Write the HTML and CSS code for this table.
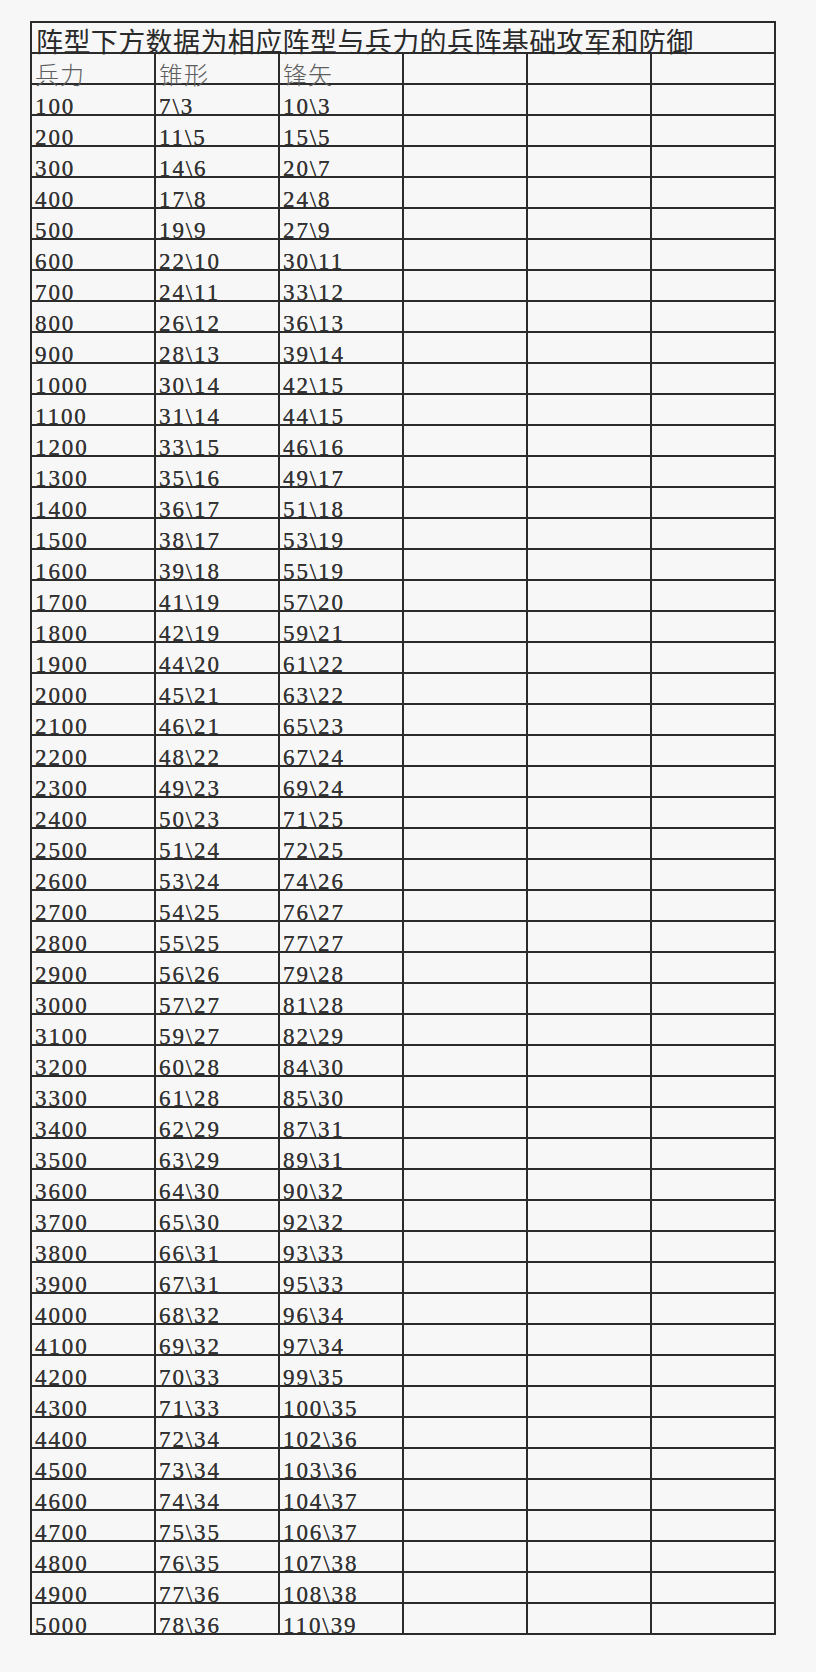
FILE: index.html
```html
<!DOCTYPE html>
<html lang="zh-CN">
<head>
<meta charset="utf-8">
<title>阵型数据</title>
<link rel="stylesheet" href="styles.css">
</head>
<body>
<div class="page">
<table class="sheet">
<colgroup><col><col><col><col><col><col></colgroup>
<tr class="title-row"><td colspan="6" class="title">阵型下方数据为相应阵型与兵力的兵阵基础攻军和防御</td></tr>
<tr class="head-row"><td>兵力</td><td>锥形</td><td>锋矢</td><td></td><td></td><td></td></tr>
<tr><td>100</td><td>7\3</td><td>10\3</td><td></td><td></td><td></td></tr>
<tr><td>200</td><td>11\5</td><td>15\5</td><td></td><td></td><td></td></tr>
<tr><td>300</td><td>14\6</td><td>20\7</td><td></td><td></td><td></td></tr>
<tr><td>400</td><td>17\8</td><td>24\8</td><td></td><td></td><td></td></tr>
<tr><td>500</td><td>19\9</td><td>27\9</td><td></td><td></td><td></td></tr>
<tr><td>600</td><td>22\10</td><td>30\11</td><td></td><td></td><td></td></tr>
<tr><td>700</td><td>24\11</td><td>33\12</td><td></td><td></td><td></td></tr>
<tr><td>800</td><td>26\12</td><td>36\13</td><td></td><td></td><td></td></tr>
<tr><td>900</td><td>28\13</td><td>39\14</td><td></td><td></td><td></td></tr>
<tr><td>1000</td><td>30\14</td><td>42\15</td><td></td><td></td><td></td></tr>
<tr><td>1100</td><td>31\14</td><td>44\15</td><td></td><td></td><td></td></tr>
<tr><td>1200</td><td>33\15</td><td>46\16</td><td></td><td></td><td></td></tr>
<tr><td>1300</td><td>35\16</td><td>49\17</td><td></td><td></td><td></td></tr>
<tr><td>1400</td><td>36\17</td><td>51\18</td><td></td><td></td><td></td></tr>
<tr><td>1500</td><td>38\17</td><td>53\19</td><td></td><td></td><td></td></tr>
<tr><td>1600</td><td>39\18</td><td>55\19</td><td></td><td></td><td></td></tr>
<tr><td>1700</td><td>41\19</td><td>57\20</td><td></td><td></td><td></td></tr>
<tr><td>1800</td><td>42\19</td><td>59\21</td><td></td><td></td><td></td></tr>
<tr><td>1900</td><td>44\20</td><td>61\22</td><td></td><td></td><td></td></tr>
<tr><td>2000</td><td>45\21</td><td>63\22</td><td></td><td></td><td></td></tr>
<tr><td>2100</td><td>46\21</td><td>65\23</td><td></td><td></td><td></td></tr>
<tr><td>2200</td><td>48\22</td><td>67\24</td><td></td><td></td><td></td></tr>
<tr><td>2300</td><td>49\23</td><td>69\24</td><td></td><td></td><td></td></tr>
<tr><td>2400</td><td>50\23</td><td>71\25</td><td></td><td></td><td></td></tr>
<tr><td>2500</td><td>51\24</td><td>72\25</td><td></td><td></td><td></td></tr>
<tr><td>2600</td><td>53\24</td><td>74\26</td><td></td><td></td><td></td></tr>
<tr><td>2700</td><td>54\25</td><td>76\27</td><td></td><td></td><td></td></tr>
<tr><td>2800</td><td>55\25</td><td>77\27</td><td></td><td></td><td></td></tr>
<tr><td>2900</td><td>56\26</td><td>79\28</td><td></td><td></td><td></td></tr>
<tr><td>3000</td><td>57\27</td><td>81\28</td><td></td><td></td><td></td></tr>
<tr><td>3100</td><td>59\27</td><td>82\29</td><td></td><td></td><td></td></tr>
<tr><td>3200</td><td>60\28</td><td>84\30</td><td></td><td></td><td></td></tr>
<tr><td>3300</td><td>61\28</td><td>85\30</td><td></td><td></td><td></td></tr>
<tr><td>3400</td><td>62\29</td><td>87\31</td><td></td><td></td><td></td></tr>
<tr><td>3500</td><td>63\29</td><td>89\31</td><td></td><td></td><td></td></tr>
<tr><td>3600</td><td>64\30</td><td>90\32</td><td></td><td></td><td></td></tr>
<tr><td>3700</td><td>65\30</td><td>92\32</td><td></td><td></td><td></td></tr>
<tr><td>3800</td><td>66\31</td><td>93\33</td><td></td><td></td><td></td></tr>
<tr><td>3900</td><td>67\31</td><td>95\33</td><td></td><td></td><td></td></tr>
<tr><td>4000</td><td>68\32</td><td>96\34</td><td></td><td></td><td></td></tr>
<tr><td>4100</td><td>69\32</td><td>97\34</td><td></td><td></td><td></td></tr>
<tr><td>4200</td><td>70\33</td><td>99\35</td><td></td><td></td><td></td></tr>
<tr><td>4300</td><td>71\33</td><td>100\35</td><td></td><td></td><td></td></tr>
<tr><td>4400</td><td>72\34</td><td>102\36</td><td></td><td></td><td></td></tr>
<tr><td>4500</td><td>73\34</td><td>103\36</td><td></td><td></td><td></td></tr>
<tr><td>4600</td><td>74\34</td><td>104\37</td><td></td><td></td><td></td></tr>
<tr><td>4700</td><td>75\35</td><td>106\37</td><td></td><td></td><td></td></tr>
<tr><td>4800</td><td>76\35</td><td>107\38</td><td></td><td></td><td></td></tr>
<tr><td>4900</td><td>77\36</td><td>108\38</td><td></td><td></td><td></td></tr>
<tr><td>5000</td><td>78\36</td><td>110\39</td><td></td><td></td><td></td></tr>
</table>
</div>
</body>
</html>
```
FILE: styles.css
```css
html, body {
  margin: 0;
  padding: 0;
  background: #f7f7f7;
}

.page {
  padding: 21px 0 0 30px;
}

.sheet {
  border-collapse: collapse;
  table-layout: fixed;
  width: 746px;
  font-family: "Liberation Serif", "Noto Sans CJK SC", serif;
  font-size: 23px;
  color: #333333;
}

.sheet col {
  width: 124px;
}

.sheet td {
  border: 2px solid #2b2b2b;
  height: 29px;
  padding: 0 0 0 3px;
  vertical-align: bottom;
  line-height: 15px;
  letter-spacing: 1.9px;
  white-space: nowrap;
  text-shadow: 0 0 0.6px #444;
}

.sheet .title {
  font-family: "Noto Sans CJK SC", sans-serif;
  font-size: 27px;
  color: #2a2a2a;
  letter-spacing: 0.4px;
  line-height: 22px;
  padding-left: 4px;
  text-shadow: none;
}

.head-row td {
  font-family: "Noto Sans CJK SC", sans-serif;
  font-size: 24px;
  font-weight: 300;
  color: #5e5e5e;
  line-height: 18px;
  letter-spacing: 1px;
  text-shadow: none;
}
```
